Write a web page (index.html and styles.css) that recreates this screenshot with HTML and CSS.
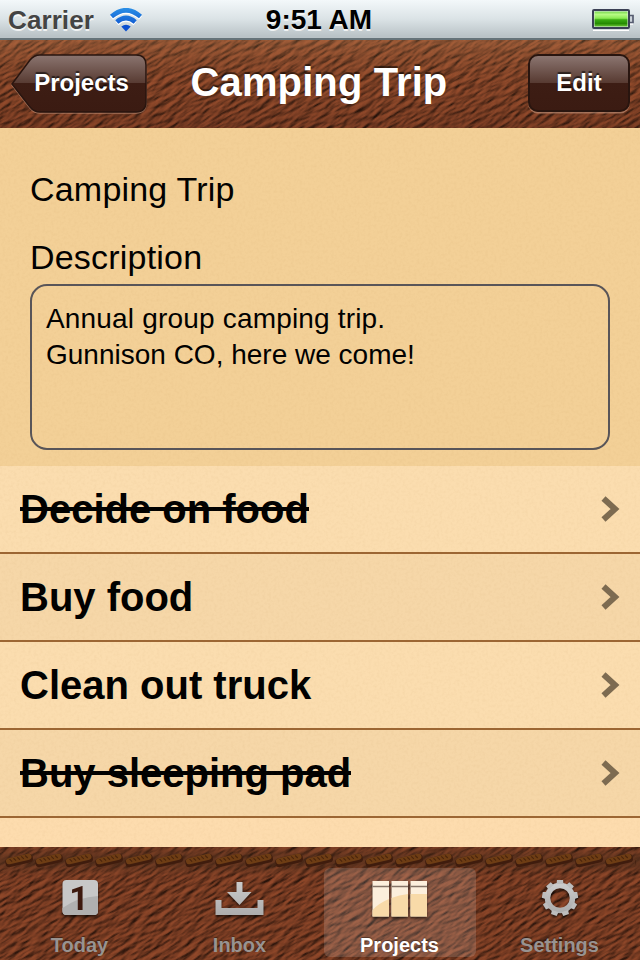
FILE: index.html
```
<!DOCTYPE html>
<html lang="en">
<head>
<meta charset="utf-8">
<title>Camping Trip</title>
<link rel="stylesheet" href="styles.css">
</head>
<body>
<svg class="defs" width="0" height="0" aria-hidden="true">
  <defs>
    <filter id="leather" x="0" y="0" width="100%" height="100%" color-interpolation-filters="sRGB">
      <feTurbulence type="fractalNoise" baseFrequency="0.065 0.23" numOctaves="3" seed="12" result="n"/>
      <feDiffuseLighting in="n" surfaceScale="1.8" diffuseConstant="1.12" lighting-color="#90492b">
        <feDistantLight azimuth="250" elevation="50"/>
      </feDiffuseLighting>
    </filter>
    <filter id="paper" x="0" y="0" width="100%" height="100%" color-interpolation-filters="sRGB">
      <feTurbulence type="fractalNoise" baseFrequency="0.35" numOctaves="3" seed="4"/>
      <feColorMatrix values="0 0 0 0 .6  0 0 0 0 .4  0 0 0 0 .15  .1 0 0 0 -.04"/>
    </filter>
    <linearGradient id="navShade" x2="0" y2="1">
      <stop offset="0" stop-color="#c08a58" stop-opacity=".28"/>
      <stop offset=".5" stop-color="#70401f" stop-opacity=".1"/>
      <stop offset="1" stop-color="#200800" stop-opacity=".16"/>
    </linearGradient>
    <linearGradient id="btn" x2="0" y2="1">
      <stop offset="0" stop-color="#8b7570"/>
      <stop offset=".5" stop-color="#573a31"/>
      <stop offset=".5" stop-color="#3d1d14"/>
      <stop offset="1" stop-color="#3b1b12"/>
    </linearGradient>
    <linearGradient id="wifi" gradientUnits="userSpaceOnUse" x1="0" y1="0" x2="0" y2="24">
      <stop offset="0" stop-color="#2a8fe6"/>
      <stop offset="1" stop-color="#0745c8"/>
    </linearGradient>
    <linearGradient id="grey" x2="0" y2="1">
      <stop offset="0" stop-color="#cacaca"/>
      <stop offset="1" stop-color="#adadad"/>
    </linearGradient>
    <linearGradient id="charge" x2="0" y2="1">
      <stop offset="0" stop-color="#79d850"/>
      <stop offset=".2" stop-color="#b5fa83"/>
      <stop offset=".45" stop-color="#8bea53"/>
      <stop offset=".55" stop-color="#3bad12"/>
      <stop offset=".8" stop-color="#268b03"/>
      <stop offset="1" stop-color="#66c432"/>
    </linearGradient>
    <linearGradient id="stitchBand" x2="0" y2="1">
      <stop offset="0" stop-color="#4a2c1a" stop-opacity=".1"/>
      <stop offset=".5" stop-color="#4a2c1a" stop-opacity=".65"/>
      <stop offset="1" stop-color="#4a2c1a" stop-opacity="0"/>
    </linearGradient>
    <pattern id="stitch" x="4" y="0" width="30" height="26" patternUnits="userSpaceOnUse">
      <g transform="rotate(-13 15 13)">
        <rect x="1" y="9" width="28" height="9" rx="4" fill="#3f1c0d"/>
        <rect x="2" y="9" width="26" height="6" rx="3" fill="#6e3d14"/>
        <path d="M6 10l2 3M10 10l2 3M14 10l2 3M18 10l2 3M22 10l2 3" stroke="#4a240b" stroke-width="1.2"/>
      </g>
    </pattern>
  </defs>
</svg>

<div class="phone">
  <header class="status">
    <div class="carrier"><span class="carrier-name">Carrier</span>
      <svg class="wifi" width="34" height="26" viewBox="0 0 34 26">
        <g fill="none" stroke="#fff" stroke-width="4.500" transform="translate(0 1.500)"><path d="M2.500 8.500Q17 -4 31.500 8.500"/><path d="M8 14Q17 6 26 14"/></g>
        <g fill="none" stroke="url(#wifi)" stroke-width="4.600"><path d="M2.500 8.500Q17 -4 31.500 8.500"/><path d="M7.800 14Q17 6 26.200 14"/></g>
        <path d="M12.300 18.500q4.700-3.500 9.400 0l-4.700 5z" fill="#0b50d0"/>
      </svg>
    </div>
    <div class="clock">9:51 AM</div>
    <div class="power">
      <svg width="42" height="22" viewBox="0 0 42 22">
        <path d="M1 21.500h36M38 15h3" stroke="#fff" stroke-width="1.500"/>
        <rect x="1" y="1" width="36" height="18" rx="1" fill="#dfe9e6" stroke="#3b4055" stroke-width="2"/>
        <rect x="2.500" y="2.500" width="33" height="15" fill="url(#charge)"/>
        <path d="M38 6.500h3v7h-3" fill="#ccd3da" stroke="#565c70" stroke-width="1.700"/>
      </svg>
    </div>
  </header>

  <nav class="navbar">
    <svg class="skin" width="640" height="88" viewBox="0 0 640 88">
      <g transform="rotate(-30 320 44)"><rect x="-40" y="-190" width="720" height="470" filter="url(#leather)"/></g>
      <rect width="640" height="88" fill="url(#navShade)"/>
    </svg>
    <button class="back">
      <svg class="skin" width="136" height="61" viewBox="0 0 136 61">
        <path d="M1 31L19 7Q23 2 29 2H125Q135 2 135 12V49Q135 59 125 59H29Q23 59 19 54Z" fill="none" stroke="#ba8a72" stroke-opacity=".7" stroke-width="1.500"/>
        <path d="M1 30L19 6Q23 1 29 1H125Q135 1 135 11V48Q135 58 125 58H29Q23 58 19 53Z" fill="url(#btn)" stroke="#29150f" stroke-width="1.500"/>
      </svg>
      <span>Projects</span>
    </button>
    <h1>Camping Trip</h1>
    <button class="edit"><span>Edit</span></button>
  </nav>

  <main>
    <svg class="skin" width="640" height="719"><rect width="640" height="719" filter="url(#paper)"/></svg>
    <section class="details">
      <div class="name">Camping Trip</div>
      <div class="label">Description</div>
      <div class="note"><span class="first">Annual group camping trip.</span><br>Gunnison CO, here we come!</div>
    </section>
    <ul class="tasks">
      <li><span class="done">Decide on food</span><svg class="chev" width="20" height="26" viewBox="0 0 20 26"><path d="M3.500 2.500L15 13L3.500 23.500" /></svg></li>
      <li><span>Buy food</span><svg class="chev" width="20" height="26" viewBox="0 0 20 26"><path d="M3.500 2.500L15 13L3.500 23.500" /></svg></li>
      <li><span>Clean out truck</span><svg class="chev" width="20" height="26" viewBox="0 0 20 26"><path d="M3.500 2.500L15 13L3.500 23.500" /></svg></li>
      <li><span class="done">Buy sleeping pad</span><svg class="chev" width="20" height="26" viewBox="0 0 20 26"><path d="M3.500 2.500L15 13L3.500 23.500" /></svg></li>
    </ul>
  </main>

  <footer class="tabs">
    <svg class="skin" width="640" height="113" viewBox="0 0 640 113">
      <g transform="rotate(-30 320 56)"><rect x="-50" y="-190" width="740" height="490" filter="url(#leather)"/></g>
      <rect width="640" height="113" fill="#2a0d04" fill-opacity=".1"/>
      <rect width="640" height="28" fill="url(#stitchBand)"/>
      <rect x="4" width="632" height="26" fill="url(#stitch)"/>
    </svg>
    <div class="tab">
      <svg class="icon" width="60" height="44" viewBox="0 0 60 44">
        <rect x="12.500" y="4" width="35.500" height="35" rx="4" fill="#c7c7c7"/>
        <path d="M12.500 32Q28 21 48 20V35Q48 39 44 39H16.500Q12.500 39 12.500 35Z" fill="#b0b0b0"/>
        <text x="29" y="34" text-anchor="middle" class="digit">1</text>
      </svg>
      <span>Today</span>
    </div>
    <div class="tab">
      <svg class="icon" width="60" height="44" viewBox="0 0 60 44">
        <path d="M26.500 6H32.500V16H41.500L29.500 29L17 16H26.500ZM5.500 24H11.500V32H47.500V24H53.500V39H5.500Z" fill="url(#grey)"/>
      </svg>
      <span>Inbox</span>
    </div>
    <div class="tab active">
      <svg class="icon" width="60" height="44" viewBox="0 0 60 44">
        <path d="M2.500 5h16.500v35.500h-16.500zM21.500 5h16.500v35.500h-16.500zM40.500 5h16.500v35.500h-16.500z" fill="#fcefdc"/>
        <path d="M2.500 34Q9 27 19 23V40.500H2.500ZM21.500 22Q29 19 38 18V40.500H21.500ZM40.500 18H57V40.500H40.500Z" fill="#f8daa8"/>
        <path d="M2.500 10.500h16.500M21.500 10.500h16.500M40.500 10.500h16.500" stroke="#857467" stroke-width="1.500"/>
      </svg>
      <span>Projects</span>
    </div>
    <div class="tab">
      <svg class="icon" width="60" height="44" viewBox="0 0 60 44">
        <g transform="translate(30 22)" fill="#bdbdbd">
          <circle r="12.500" fill="none" stroke="url(#grey)" stroke-width="5.500"/>
          <path id="tooth" d="M-3.500-14L-3-18H3L3.500-14Z"/>
          <use href="#tooth" transform="rotate(40)"/><use href="#tooth" transform="rotate(80)"/><use href="#tooth" transform="rotate(120)"/><use href="#tooth" transform="rotate(160)"/><use href="#tooth" transform="rotate(200)"/><use href="#tooth" transform="rotate(240)"/><use href="#tooth" transform="rotate(280)"/><use href="#tooth" transform="rotate(320)"/>
        </g>
      </svg>
      <span>Settings</span>
    </div>
  </footer>
</div>
</body>
</html>
```
FILE: styles.css
```
* { box-sizing: border-box; }
body { margin: 0; background: #000; font-family: "Liberation Sans", Arial, sans-serif; }
.defs { position: absolute; }
.phone { width: 640px; height: 960px; display: flex; flex-direction: column; overflow: hidden; }
.skin { position: absolute; left: 0; top: 0; display: block; }

.status {
  height: 40px; flex: none; padding: 0 6px 0 8px;
  display: grid; grid-template-columns: 1fr auto 1fr; align-items: center;
  background: linear-gradient(#f3f8fa, #dbe3e6 50%, #bac3c7 95%);
  border-bottom: 2px solid #667379;
  font-weight: bold; text-shadow: 0 2px 0 rgba(255,255,255,.75);
}
.carrier { display: flex; align-items: center; gap: 15px; color: #444; font-size: 26px; }
.carrier-name { letter-spacing: .1px; padding-top: 2px; }
.wifi { margin-top: 3px; }
.clock { font-size: 28px; color: #000; padding: 1px 4px 0 0; }
.power { display: flex; justify-content: flex-end; margin-top: 2px; }

.navbar {
  position: relative; height: 88px; flex: none; overflow: hidden; padding: 0 10px 0 11px;
  display: grid; grid-template-columns: 136px 1fr 102px; align-items: center;
}
.navbar h1 {
  position: relative; margin: 0 0 5px; padding-right: 37px; text-align: center;
  color: #fff; font-size: 40px; line-height: 48px; text-shadow: 0 -2px 1px rgba(0,0,0,.55);
  letter-spacing: .1px;
}
button {
  position: relative; height: 60px; margin: 0 0 3px; padding: 0; border: 0; background: none;
  color: #fff; font: bold 24px "Liberation Sans", Arial, sans-serif; text-shadow: 0 -2px 1px rgba(0,0,0,.6);
}
button span { position: relative; }
.back { margin-bottom: 1px; padding: 0 0 2px 5px; }
.edit {
  height: 58px; border: 2px solid #29150f; border-radius: 10px;
  background: linear-gradient(#8b7570, #573a31 50%, #3d1d14 50%, #3b1b12);
  box-shadow: 0 1.500px 0 rgba(190,145,120,.65);
}

main { position: relative; flex: 1; background: #fddcae; overflow: hidden; }
.details { height: 338px; padding: 41px 30px 0; background: #f3d097; font-size: 34px; line-height: 40px; }
.name, .label { letter-spacing: .2px; }
.label { margin-top: 28px; }
.note {
  height: 166px; margin-top: 7px; padding: 15px 14px;
  border: 2px solid #585559; border-radius: 17px; font-size: 28px; line-height: 36px;
}
.first { letter-spacing: .18px; }
.tasks { list-style: none; margin: 0; padding: 0; }
.tasks li {
  height: 88px; padding: 0 20px 0 20px; border-bottom: 2px solid #9c6633; background: #fbddaf;
  display: flex; align-items: center; justify-content: space-between;
  font-size: 40px; font-weight: bold;
}
.tasks li:nth-child(even) { background: #f6d7a8; }
.done { background: linear-gradient(#000, #000) 0 20px / 100% 4px no-repeat; }
.chev { fill: none; stroke: #7d6b51; stroke-width: 6; }
main > .skin { z-index: 1; pointer-events: none; }

.tabs {
  position: relative; height: 113px; flex: none; overflow: hidden; padding: 21px 4px 4px;
  display: grid; grid-template-columns: repeat(4, 152px); column-gap: 8px;
}
.tab {
  position: relative; display: flex; flex-direction: column; align-items: center; padding-top: 8px;
  border-radius: 6px; color: #989391; font-size: 20px; font-weight: bold;
}
.tab > * { margin-left: -1px; }
.tab span { line-height: 24px; margin-top: 13px; text-shadow: 0 -1px 1px rgba(0,0,0,.4); }
.tab.active { color: #fff; background: rgba(255,255,255,.15); }
.icon { filter: drop-shadow(0 2px 1px rgba(0,0,0,.6)); }
.digit { font: bold 34px Roboto, "Liberation Sans", sans-serif; fill: #3d190e; }
```
